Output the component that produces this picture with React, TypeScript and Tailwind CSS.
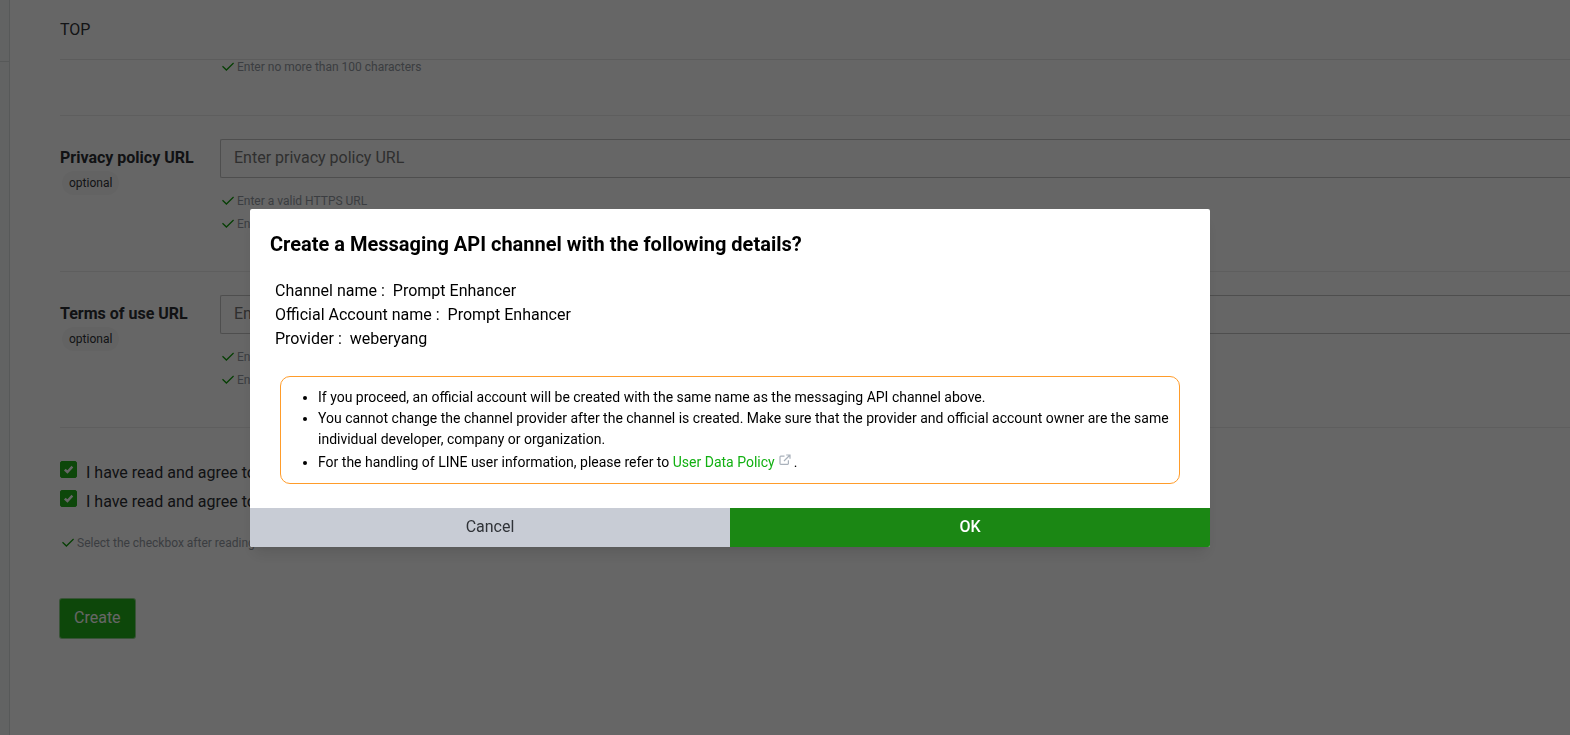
import { useState } from 'react';

function CheckMark() {
  return (
    <svg className="h-3 w-3 shrink-0 text-[#0f9d0a]" viewBox="0 0 12 12" fill="none" stroke="currentColor" strokeWidth="1.3" aria-hidden="true">
      <path d="M0.5 5.2 4.4 9 11.6 2" />
    </svg>
  );
}

function Hint({ children }: { children: string }) {
  return (
    <p className="flex h-[23px] items-center gap-[3px] pl-0.5 text-xs text-[#949aa2]">
      <CheckMark />
      {children}
    </p>
  );
}

function UrlField({ id, label, placeholder }: { id: string; label: string; placeholder: string }) {
  return (
    <div className="flex border-t border-[#ececec] pt-[23px] pb-9">
      <div className="w-40 shrink-0 pt-[7px]">
        <label htmlFor={id} className="block leading-6 font-bold text-[#2b2e33]">
          {label}
        </label>
        <span className="ml-0.5 inline-flex h-6 items-center rounded-full bg-[#f7f7f7] px-[7px] text-xs text-[#303338]">optional</span>
      </div>
      <div className="min-w-0 flex-1">
        <input
          id={id}
          type="url"
          placeholder={placeholder}
          className="block h-[39px] w-full rounded-l-xs border border-r-0 border-[#c4c4c4] px-[13px] pb-0.5 outline-none placeholder:text-[#767676]"
        />
        <div className="mt-[11px]">
          <Hint>Enter a valid HTTPS URL</Hint>
          <Hint>Enter no more than 500 characters</Hint>
        </div>
      </div>
    </div>
  );
}

function Agreement({ id }: { id: string }) {
  const [checked, setChecked] = useState(true);
  return (
    <div className="flex h-[29px] items-start">
      <span className="relative flex">
        <input
          id={id}
          type="checkbox"
          checked={checked}
          onChange={() => setChecked(!checked)}
          className="h-[17px] w-[17px] appearance-none rounded-xs border border-[#22b119] checked:bg-[#22b119]"
        />
        {checked && (
          <svg className="pointer-events-none absolute inset-0 h-[17px] w-[17px]" viewBox="0 0 17 17" fill="none" stroke="#fff" strokeWidth="2.4" aria-hidden="true">
            <path d="M4.8 8.6 7.4 11 12.4 5.6" />
          </svg>
        )}
      </span>
      <label htmlFor={id} className="pl-[9px] leading-6 text-[#2b2e33]">
        I have read and agree to
      </label>
    </div>
  );
}

function ExternalIcon() {
  return (
    <svg className="mr-[3px] ml-1 inline-block h-[13px] w-3 align-baseline text-[#a9b1bb]" viewBox="0 0 12 13" fill="none" stroke="currentColor" strokeWidth="1.2" aria-hidden="true">
      <path d="M5.5 2.2H1.8q-.8 0-.8.8v6.6q0 .8.8.8h6.8q.8 0 .8-.8V6.2M7.2 1H11v3.8M11 1 5 7" />
    </svg>
  );
}

export default function App() {
  return (
    <div className="flex min-h-screen bg-white font-[Roboto,sans-serif] text-base text-[#2b2e33]">
      <aside className="w-2.5 shrink-0 border-r border-[#dadfdf] bg-[#f5f7f7]">
        <div className="h-[62px] border-b border-[#dadfdf]" />
      </aside>
      <main className="min-w-0 flex-1 pl-[50px]">
        <header className="flex h-[60px] items-center border-b border-[#e6e6e6] text-[#303338]">TOP</header>
        <div className="-mt-[5px] pb-[37px] pl-40">
          <Hint>Enter no more than 100 characters</Hint>
        </div>
        <UrlField id="privacy" label="Privacy policy URL" placeholder="Enter privacy policy URL" />
        <UrlField id="terms" label="Terms of use URL" placeholder="Enter terms of use URL" />
        <div className="border-t border-[#ececec] pt-[33px]">
          <Agreement id="agree-account" />
          <Agreement id="agree-api" />
          <div className="pt-3">
            <Hint>Select the checkbox after reading</Hint>
          </div>
          <button type="button" className="mt-[45px] h-[39px] rounded-xs bg-[#22b119] px-[14px] pb-0.5 text-white ring-1 ring-[#90cf8c]">
            Create
          </button>
        </div>
      </main>

      <div className="fixed inset-0 flex items-start justify-center bg-black/60 pt-[209px] pr-[110px]">
        <section role="dialog" aria-modal="true" aria-labelledby="dialog-title" className="w-full max-w-[960px] rounded-xs bg-white text-black shadow-lg">
          <h2 id="dialog-title" className="px-5 pt-5 text-xl leading-[30px] font-bold">
            Create a Messaging API channel with the following details?
          </h2>
          <dl className="px-[25px] pt-5 leading-6">
            <div className="flex gap-2">
              <dt>Channel name :</dt>
              <dd>Prompt Enhancer</dd>
            </div>
            <div className="flex gap-2">
              <dt>Official Account name :</dt>
              <dd>Prompt Enhancer</dd>
            </div>
            <div className="flex gap-2">
              <dt>Provider :</dt>
              <dd>weberyang</dd>
            </div>
          </dl>
          <ul className="mx-[30px] mt-[25px] mb-6 list-disc rounded-[10px] border border-[#ff9c2a] py-[10px] pr-2 pl-[37px] text-sm leading-[21px]">
            <li>If you proceed, an official account will be created with the same name as the messaging API channel above.</li>
            <li>
              You cannot change the channel provider after the channel is created. Make sure that the provider and official account owner are the same
              individual developer, company or organization.
            </li>
            <li className="pt-0.5">
              For the handling of LINE user information, please refer to{' '}
              <a href="#policy" className="text-[#12b012]">
                User Data Policy
                <ExternalIcon />
              </a>
              .
            </li>
          </ul>
          <div className="grid grid-cols-2">
            <button type="button" className="h-[39px] rounded-bl-xs bg-[#c8ccd5] pb-0.5 text-[#303338]">
              Cancel
            </button>
            <button type="button" className="h-[39px] rounded-br-xs bg-[#1b8714] pb-0.5 font-medium text-white">
              OK
            </button>
          </div>
        </section>
      </div>
    </div>
  );
}
